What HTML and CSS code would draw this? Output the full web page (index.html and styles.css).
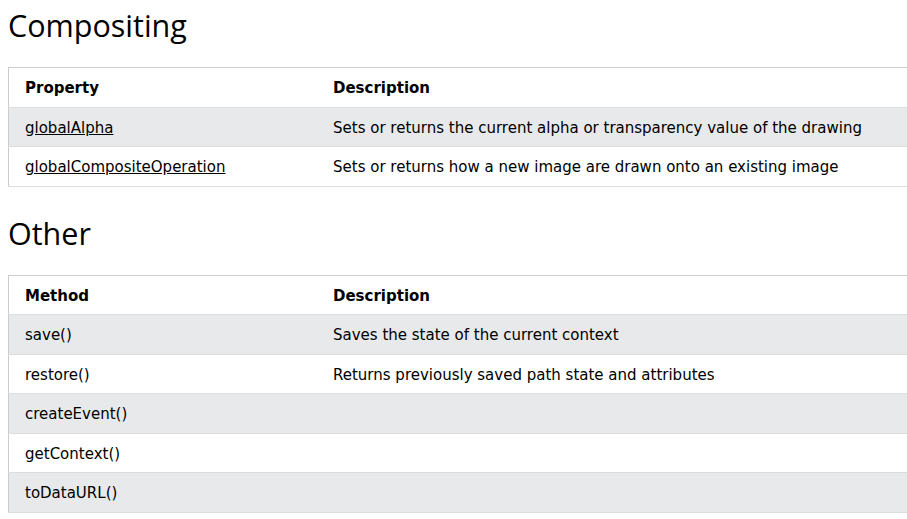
FILE: index.html
```html
<!DOCTYPE html>
<html>
<head>
<meta charset="utf-8">
<link rel="stylesheet" href="styles.css">
</head>
<body>
<div class="page">
  <h2 class="heading first">Compositing</h2>
  <table class="ref">
    <tr><th class="c1">Property</th><th>Description</th></tr>
    <tr><td><a href="#">globalAlpha</a></td><td>Sets or returns the current alpha or transparency value of the drawing</td></tr>
    <tr><td><a href="#">globalCompositeOperation</a></td><td>Sets or returns how a new image are drawn onto an existing image</td></tr>
  </table>
  <h2 class="heading">Other</h2>
  <table class="ref">
    <tr><th class="c1">Method</th><th>Description</th></tr>
    <tr><td>save()</td><td>Saves the state of the current context</td></tr>
    <tr><td>restore()</td><td>Returns previously saved path state and attributes</td></tr>
    <tr><td>createEvent()</td><td></td></tr>
    <tr><td>getContext()</td><td></td></tr>
    <tr><td>toDataURL()</td><td></td></tr>
  </table>
</div>
</body>
</html>
```
FILE: styles.css
```css
html, body {
  margin: 0;
  padding: 0;
  background: #fff;
  overflow: hidden;
}
.page {
  padding: 0 8px;
  font-family: "DejaVu Sans", Verdana, sans-serif;
  font-size: 15px;
  color: #000;
  overflow: hidden;
}
.heading {
  font-family: "Open Sans", "Segoe UI", sans-serif;
  font-weight: 400;
  font-size: 30.5px;
  line-height: 44px;
  padding-top: 4px;
  margin: 20px 0;
}
.heading.first {
  margin-top: -1px;
}
.ref {
  border-collapse: collapse;
  border-spacing: 0;
  width: 1060px;
  border: 1px solid #ccc;
  margin: 20px 0;
}
.ref tr {
  border-bottom: 1px solid #ddd;
}
.ref tr:nth-child(even) {
  background: #e7e9eb;
}
.ref th, .ref td {
  text-align: left;
  vertical-align: top;
  padding: 9px 8px 7px;
  line-height: 1.5;
}
.ref th {
  font-weight: 700;
}
.ref th:first-child, .ref td:first-child {
  padding-left: 16px;
}
.ref .c1 {
  width: 292px;
}
.ref a {
  color: #000;
  text-decoration: underline;
}
```
